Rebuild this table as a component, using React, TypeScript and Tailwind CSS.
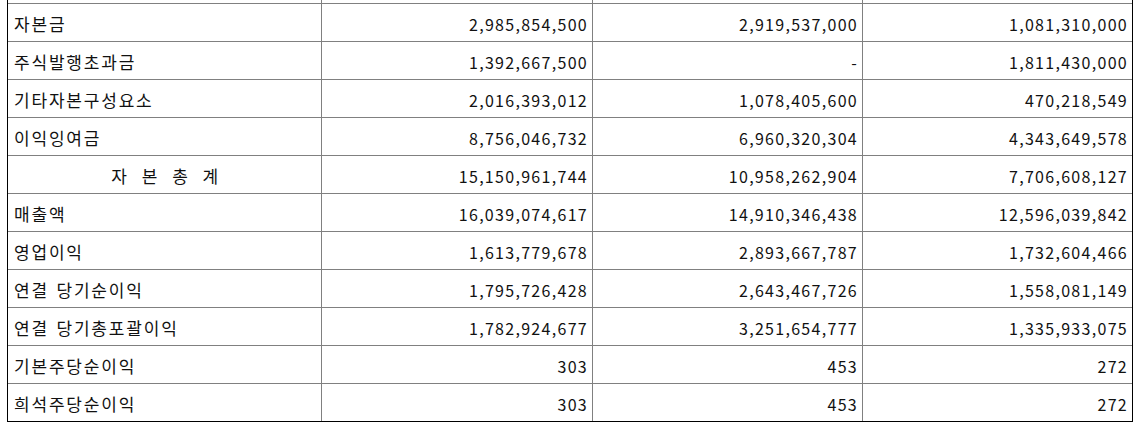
import React from "react";

type Row = { label: string; v: [string, string, string]; center?: boolean };

const rows: Row[] = [
  { label: "자본금", v: ["2,985,854,500", "2,919,537,000", "1,081,310,000"] },
  { label: "주식발행초과금", v: ["1,392,667,500", "-", "1,811,430,000"] },
  { label: "기타자본구성요소", v: ["2,016,393,012", "1,078,405,600", "470,218,549"] },
  { label: "이익잉여금", v: ["8,756,046,732", "6,960,320,304", "4,343,649,578"] },
  { label: "자 본 총 계", v: ["15,150,961,744", "10,958,262,904", "7,706,608,127"], center: true },
  { label: "매출액", v: ["16,039,074,617", "14,910,346,438", "12,596,039,842"] },
  { label: "영업이익", v: ["1,613,779,678", "2,893,667,787", "1,732,604,466"] },
  { label: "연결 당기순이익", v: ["1,795,726,428", "2,643,467,726", "1,558,081,149"] },
  { label: "연결 당기총포괄이익", v: ["1,782,924,677", "3,251,654,777", "1,335,933,075"] },
  { label: "기본주당순이익", v: ["303", "453", "272"] },
  { label: "희석주당순이익", v: ["303", "453", "272"] },
];

export default function App() {
  return (
    <div
      className="w-[1141px] h-[425px] bg-white pl-[7px] overflow-hidden text-[#111]"
      style={{ fontFamily: '"Noto Sans CJK KR", "Noto Sans", sans-serif' }}
    >
      <div className="w-[1126px] border-l border-r border-b border-black">
        <div className="flex h-[3px]">
          <div className="w-[314px] border-r border-[#808080]" />
          <div className="w-[271px] border-r border-[#808080]" />
          <div className="w-[270px] border-r border-[#808080]" />
          <div className="flex-1" />
        </div>
        {rows.map((r, i) => (
          <div key={i} className="flex h-[38px] border-t border-[#808080] text-[16px] leading-none">
            <div
              className={
                r.center
                  ? "w-[314px] border-r border-[#808080] flex items-center justify-center pt-[2px] text-[17px] tracking-[5.5px] pl-[6px]"
                  : "w-[314px] border-r border-[#808080] flex items-center pl-[6px] pt-[2px] text-[17px] tracking-[1.8px] [word-spacing:2px]"
              }
            >
              {r.label}
            </div>
            <div className="w-[271px] border-r border-[#808080] flex items-center justify-end pr-[4px] pt-[3px] tracking-[1.3px]">
              {r.v[0]}
            </div>
            <div className="w-[270px] border-r border-[#808080] flex items-center justify-end pr-[4px] pt-[3px] tracking-[1.3px]">
              {r.v[1]}
            </div>
            <div className="flex-1 flex items-center justify-end pr-[4px] pt-[3px] tracking-[1.3px]">
              {r.v[2]}
            </div>
          </div>
        ))}
      </div>
    </div>
  );
}
